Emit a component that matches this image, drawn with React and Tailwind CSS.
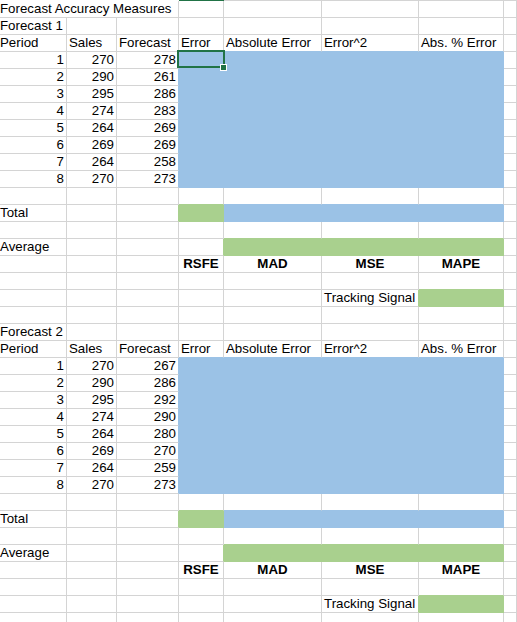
import React from "react";

const sales = [270, 290, 295, 274, 264, 269, 264, 270];
const fc1 = [278, 261, 286, 283, 269, 269, 258, 273];
const fc2 = [267, 286, 292, 290, 280, 270, 259, 273];

const E = () => ({});
const blankRow = () => Array.from({ length: 8 }, E);

function section(name, fc) {
  const rows = [];
  const r1 = blankRow();
  r1[0] = { t: name };
  rows.push(r1);
  const hdr = ["Period", "Sales", "Forecast", "Error", "Absolute Error", "Error^2", "Abs. % Error"];
  const h = blankRow();
  hdr.forEach((t, i) => (h[i] = { t }));
  rows.push(h);
  for (let i = 0; i < 8; i++) {
    const r = blankRow();
    r[0] = { t: String(i + 1), a: "r" };
    r[1] = { t: String(sales[i]), a: "r" };
    r[2] = { t: String(fc[i]), a: "r" };
    r[3] = { f: "b" };
    r[4] = { f: "b" };
    r[5] = { f: "b" };
    r[6] = { f: "b" };
    rows.push(r);
  }
  rows.push(blankRow());
  const tot = blankRow();
  tot[0] = { t: "Total" };
  tot[3] = { f: "g" };
  tot[4] = { f: "b" };
  tot[5] = { f: "b" };
  tot[6] = { f: "b" };
  rows.push(tot);
  rows.push(blankRow());
  const avg = blankRow();
  avg[0] = { t: "Average" };
  avg[4] = { f: "g" };
  avg[5] = { f: "g" };
  avg[6] = { f: "g" };
  rows.push(avg);
  const lab = blankRow();
  lab[3] = { t: "RSFE", a: "c", b: true };
  lab[4] = { t: "MAD", a: "c", b: true };
  lab[5] = { t: "MSE", a: "c", b: true };
  lab[6] = { t: "MAPE", a: "c", b: true };
  rows.push(lab);
  rows.push(blankRow());
  const ts = blankRow();
  ts[5] = { t: "Tracking Signal" };
  ts[6] = { f: "g" };
  rows.push(ts);
  return rows;
}

const title = blankRow();
title[0] = { t: "Forecast Accuracy Measures", span: 3 };
title[1] = { hidden: true };
title[2] = { hidden: true };

const rows = [
  title,
  ...section("Forecast 1", fc1),
  blankRow(),
  ...section("Forecast 2", fc2),
  blankRow(),
];

const fillOf = (r, c) => (rows[r] && rows[r][c] ? rows[r][c].f : undefined);

const rightCls = {
  b: "border-r-[#9bc2e6]",
  g: "border-r-[#a9d08e]",
  n: "border-r-[#d4d4d4]",
};
const bottomCls = {
  b: "border-b-[#9bc2e6]",
  g: "border-b-[#a9d08e]",
  n: "border-b-[#d4d4d4]",
};
const bgCls = { b: "bg-[#9bc2e6]", g: "bg-[#a9d08e]", n: "bg-white" };
const alignCls = {
  l: "justify-start pl-[2px]",
  r: "justify-end pr-[2px]",
  c: "justify-center",
};

const gridCols = "grid grid-cols-[67px_50px_62px_45px_98px_97px_85px_1fr]";

function Cell({ r, c, cell }) {
  const own = cell.f;
  const rc = own || fillOf(r, c + (cell.span || 1)) || "n";
  const bc = own || fillOf(r + 1, c) || "n";
  const a = cell.a || "l";
  const first = c === 0 && a === "l";
  return (
    <div
      className={`flex h-[17px] items-center overflow-visible whitespace-nowrap border-r border-b ${
        rightCls[rc]
      } ${bottomCls[bc]} ${bgCls[own || "n"]} ${
        first ? "justify-start pl-0" : alignCls[a]
      } ${cell.span === 3 ? "col-span-3" : ""}`}
    >
      {cell.t ? (
        <span
          className={`inline-block leading-[16px] ${
            cell.b ? "font-bold" : "font-normal"
          }`}
        >
          {cell.t}
        </span>
      ) : null}
    </div>
  );
}

export default function App() {
  return (
    <div className="relative h-[622px] w-[517px] overflow-hidden bg-white font-['Liberation_Sans',Arial,sans-serif] text-[13.3px] text-black">
      <div className={`${gridCols} h-[1px]`}>
        <div />
        <div />
        <div />
        <div className="bg-[#217346]" />
        <div className="bg-[#d4d4d4]" />
        <div className="bg-[#d4d4d4]" />
        <div className="bg-[#d4d4d4]" />
        <div className="bg-[#d4d4d4]" />
      </div>
      {rows.map((row, r) => (
        <div key={r} className={gridCols}>
          {row.map((cell, c) =>
            cell.hidden ? null : <Cell key={c} r={r} c={c} cell={cell} />
          )}
        </div>
      ))}
      <div className="absolute left-[177px] top-[50px] h-[18px] w-[48px] border-2 border-[#217346] bg-[#9bc2e6]" />
      <div className="absolute left-[220px] top-[64px] h-[7px] w-[7px] border border-white bg-[#217346]" />
    </div>
  );
}
